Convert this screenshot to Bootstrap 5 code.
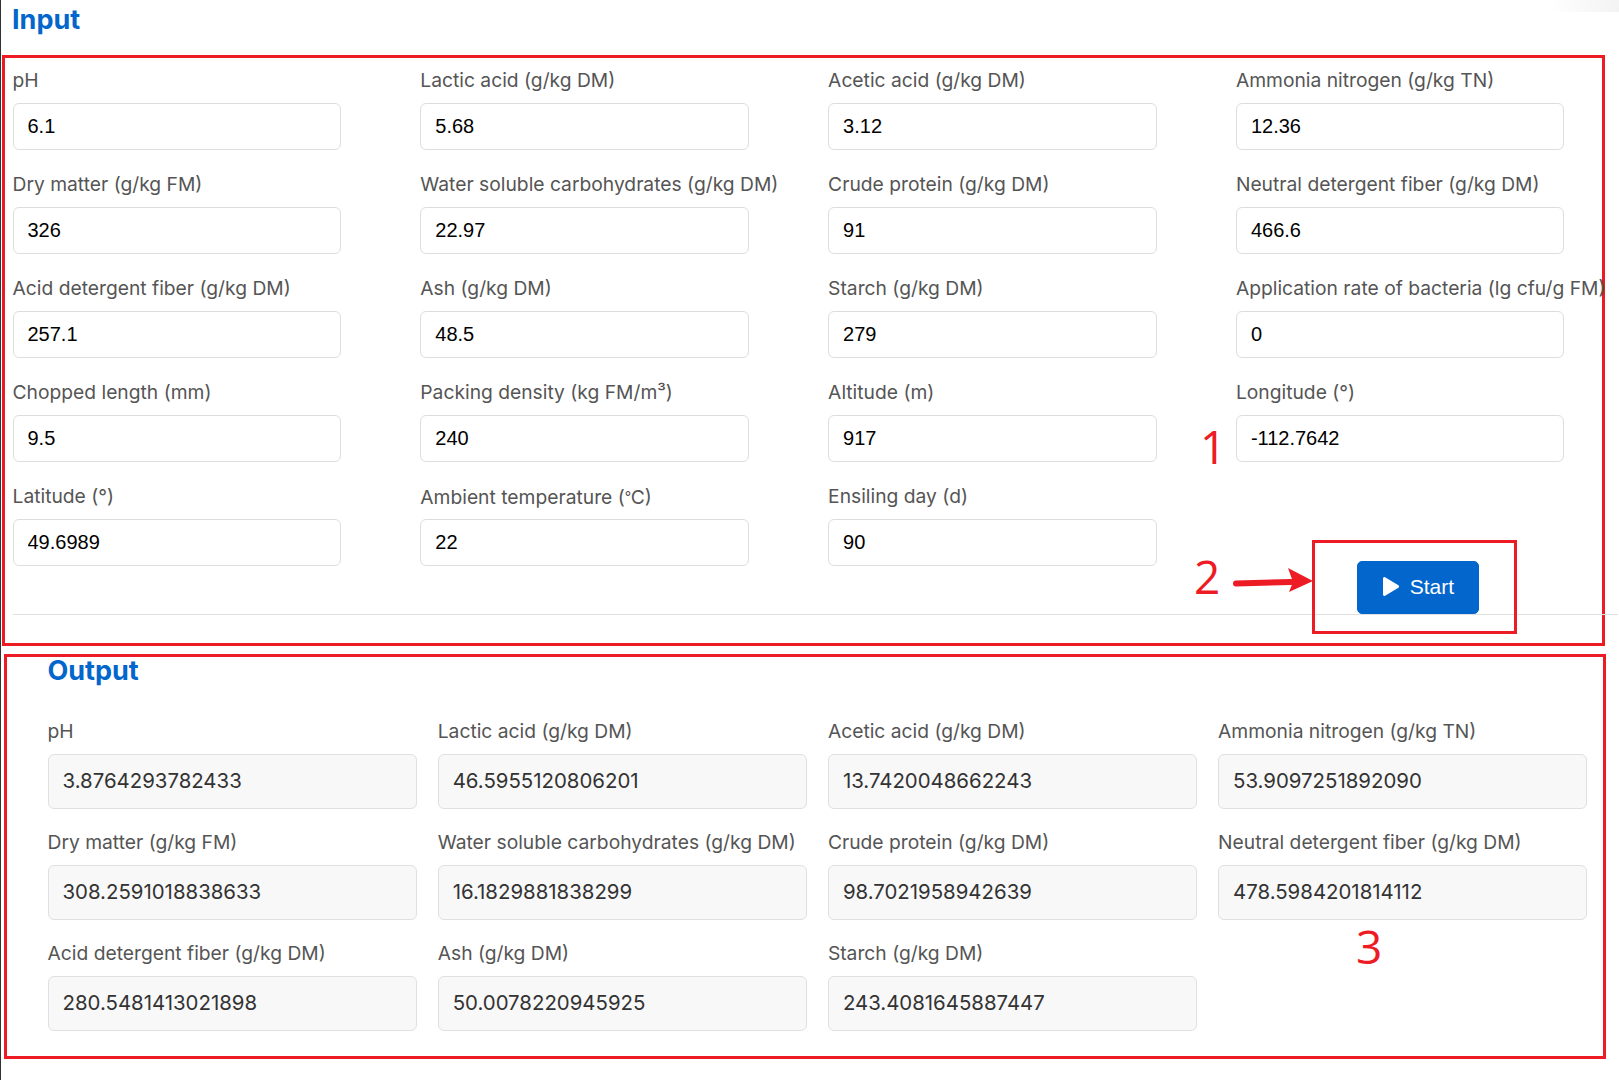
<!DOCTYPE html>
<html lang="en">
<head>
<meta charset="utf-8">
<title>Input and output</title>
<link href="https://cdn.jsdelivr.net/npm/bootstrap@5.3.0/dist/css/bootstrap.min.css" rel="stylesheet">
<style>
html,body{margin:0;background:#fff;overflow-x:hidden}
.sheet{position:relative;width:1619px;height:1080px;overflow:hidden;border-left:1px solid #333;font-family:Inter,"Liberation Sans",sans-serif}
.corner-shade{position:absolute;top:0;right:0;width:70px;height:12px;background:linear-gradient(90deg,#fff,#f3f3f3)}
.sec-title{color:#0366cc;font-weight:700;font-family:Inter,sans-serif;margin:0}
.title-in{font-size:27px;line-height:39px;height:55px;padding-left:11px}
.title-out{font-size:27px;line-height:27px;height:61px}
.box-in{width:1603px;height:591px;margin-left:1px;border:3px solid #ed1c24;padding:9px 0 0 7.5px}
.box-out{width:1602px;height:405px;margin:8px 0 0 3px;border:3px solid #ed1c24;padding:0 0 0 40.5px}
.in-grid{display:grid;grid-template-columns:repeat(4,328.5px);column-gap:79.3px;row-gap:21px}
.out-grid{display:grid;grid-template-columns:repeat(4,369.4px);column-gap:20.8px;row-gap:20.5px}
.fld-label{display:block;font-size:19.25px;line-height:27px;height:27px;margin-bottom:9px;color:#555;white-space:nowrap}
.deg-tight{font-size:14px;letter-spacing:-.5px;vertical-align:2px}
.form-control.in-val{height:47px;padding:0 14px;border:1px solid #ddd;border-radius:6px;font:20px "Liberation Sans",sans-serif;color:#000}
.form-control.out-val{height:54.5px;padding:0 14px 1px;border:1px solid #e0e0e0;border-radius:6px;background:#f8f8f8;font:400 20.4px Inter,sans-serif;color:#333}
.btn-cell{padding-left:121px;padding-top:78px}
.btn.go{width:122px;height:53px;padding:0 0 2px;background:#0366cc;border-color:#0366cc;border-radius:5px;color:#fff;font:21px "Liberation Sans",sans-serif;display:flex;align-items:center;justify-content:center;gap:10px}
.sep{width:1605px;height:1px;margin:0;background:#e0e0e0;border:0;opacity:1}
.mark-digit{position:absolute;color:#ed1c24;font:400 46px/46px "Open Sans",sans-serif}
.d1{left:1199px;top:423px}.d2{left:1193px;top:553px}.d3{left:1355px;top:923px}
.mark-box{position:absolute;left:1311px;top:540px;width:205px;height:94px;border:3px solid #ed1c24}
.mark-arrow{position:absolute;left:1230px;top:564px}
</style>
</head>
<body>
<div class="sheet">
  <div class="corner-shade"></div>
  <h2 class="sec-title title-in">Input</h2>
  <section class="box-in">
    <div class="in-grid">
      <div><label class="fld-label">pH</label><input class="form-control in-val" value="6.1"></div>
      <div><label class="fld-label">Lactic acid (g/kg DM)</label><input class="form-control in-val" value="5.68"></div>
      <div><label class="fld-label">Acetic acid (g/kg DM)</label><input class="form-control in-val" value="3.12"></div>
      <div><label class="fld-label">Ammonia nitrogen (g/kg TN)</label><input class="form-control in-val" value="12.36"></div>
      <div><label class="fld-label">Dry matter (g/kg FM)</label><input class="form-control in-val" value="326"></div>
      <div><label class="fld-label">Water soluble carbohydrates (g/kg DM)</label><input class="form-control in-val" value="22.97"></div>
      <div><label class="fld-label">Crude protein (g/kg DM)</label><input class="form-control in-val" value="91"></div>
      <div><label class="fld-label">Neutral detergent fiber (g/kg DM)</label><input class="form-control in-val" value="466.6"></div>
      <div><label class="fld-label">Acid detergent fiber (g/kg DM)</label><input class="form-control in-val" value="257.1"></div>
      <div><label class="fld-label">Ash (g/kg DM)</label><input class="form-control in-val" value="48.5"></div>
      <div><label class="fld-label">Starch (g/kg DM)</label><input class="form-control in-val" value="279"></div>
      <div><label class="fld-label">Application rate of bacteria (lg cfu/g FM)</label><input class="form-control in-val" value="0"></div>
      <div><label class="fld-label">Chopped length (mm)</label><input class="form-control in-val" value="9.5"></div>
      <div><label class="fld-label">Packing density (kg FM/m³)</label><input class="form-control in-val" value="240"></div>
      <div><label class="fld-label">Altitude (m)</label><input class="form-control in-val" value="917"></div>
      <div><label class="fld-label">Longitude (°)</label><input class="form-control in-val" value="-112.7642"></div>
      <div><label class="fld-label">Latitude (°)</label><input class="form-control in-val" value="49.6989"></div>
      <div><label class="fld-label">Ambient temperature (<span class="deg-tight">°</span>C)</label><input class="form-control in-val" value="22"></div>
      <div><label class="fld-label">Ensiling day (d)</label><input class="form-control in-val" value="90"></div>
      <div class="btn-cell">
        <button type="button" class="btn btn-primary go">
          <svg width="18" height="21" viewBox="0 0 18 21" aria-hidden="true"><path d="M1 2.4v16.2a1.4 1.4 0 0 0 2.1 1.2L16.4 11.7a1.4 1.4 0 0 0 0-2.4L3.1 1.2A1.4 1.4 0 0 0 1 2.4z" fill="#fff"/></svg>
          <span>Start</span>
        </button>
      </div>
    </div>
    <hr class="sep">
  </section>
  <section class="box-out">
    <h2 class="sec-title title-out">Output</h2>
    <div class="out-grid">
      <div><label class="fld-label">pH</label><input class="form-control out-val" readonly value="3.8764293782433"></div>
      <div><label class="fld-label">Lactic acid (g/kg DM)</label><input class="form-control out-val" readonly value="46.5955120806201"></div>
      <div><label class="fld-label">Acetic acid (g/kg DM)</label><input class="form-control out-val" readonly value="13.7420048662243"></div>
      <div><label class="fld-label">Ammonia nitrogen (g/kg TN)</label><input class="form-control out-val" readonly value="53.9097251892090"></div>
      <div><label class="fld-label">Dry matter (g/kg FM)</label><input class="form-control out-val" readonly value="308.2591018838633"></div>
      <div><label class="fld-label">Water soluble carbohydrates (g/kg DM)</label><input class="form-control out-val" readonly value="16.1829881838299"></div>
      <div><label class="fld-label">Crude protein (g/kg DM)</label><input class="form-control out-val" readonly value="98.7021958942639"></div>
      <div><label class="fld-label">Neutral detergent fiber (g/kg DM)</label><input class="form-control out-val" readonly value="478.5984201814112"></div>
      <div><label class="fld-label">Acid detergent fiber (g/kg DM)</label><input class="form-control out-val" readonly value="280.5481413021898"></div>
      <div><label class="fld-label">Ash (g/kg DM)</label><input class="form-control out-val" readonly value="50.0078220945925"></div>
      <div><label class="fld-label">Starch (g/kg DM)</label><input class="form-control out-val" readonly value="243.4081645887447"></div>
    </div>
  </section>
  <span class="mark-digit d1">1</span>
  <span class="mark-digit d2">2</span>
  <span class="mark-digit d3">3</span>
  <div class="mark-box"></div>
  <svg class="mark-arrow" width="84" height="32" viewBox="0 0 84 32" aria-hidden="true"><path d="M5 19.5 60 18" stroke="#ed1c24" stroke-width="6" stroke-linecap="round" fill="none"/><path d="M57 4 82 17 58 28 62 18z" fill="#ed1c24"/></svg>
</div>
</body>
</html>
